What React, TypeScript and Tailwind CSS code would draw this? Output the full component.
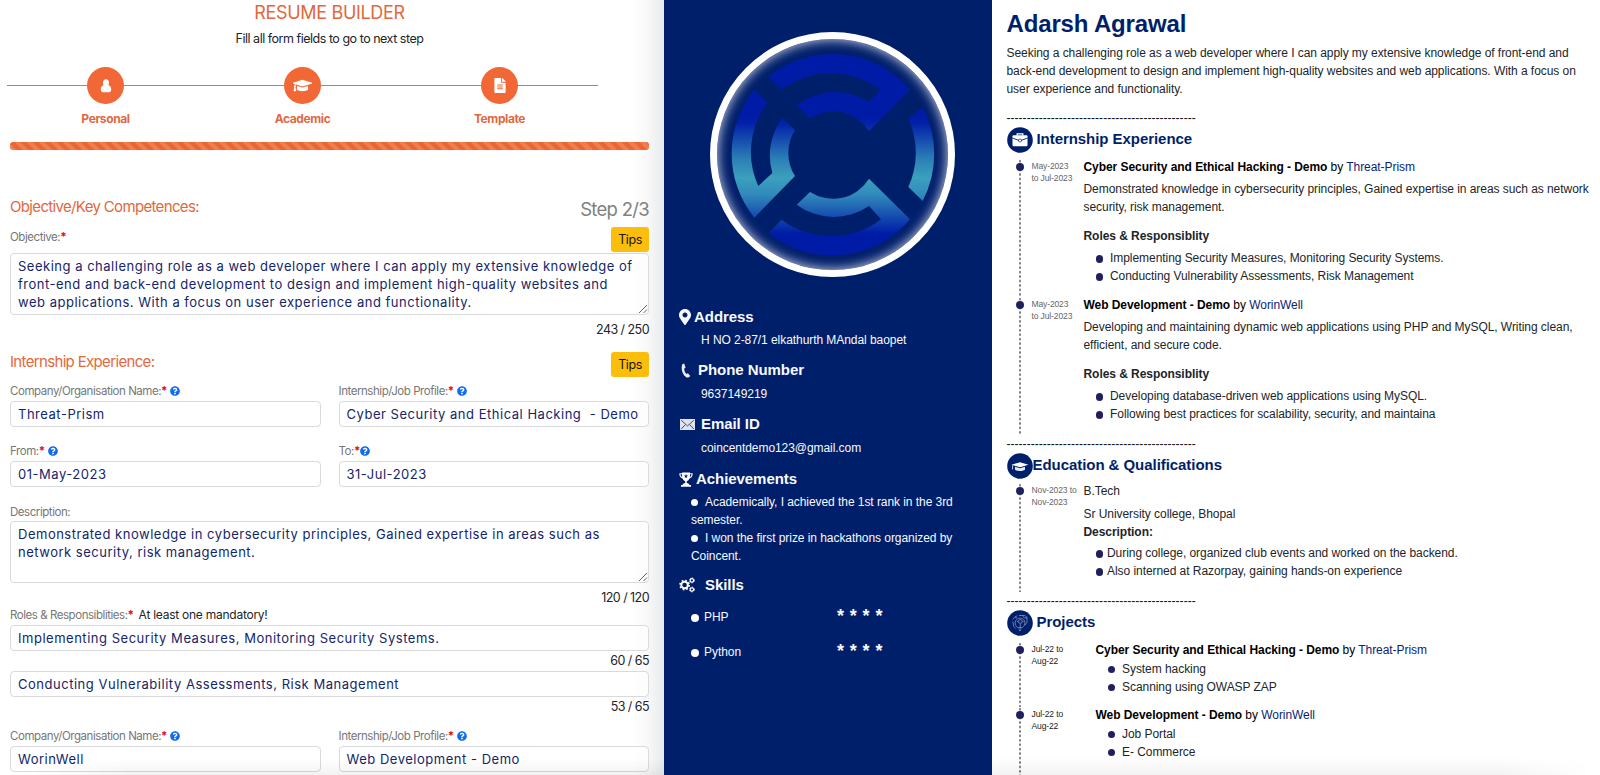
import React from "react";
import { FaMapMarkerAlt, FaQuestionCircle, FaGraduationCap, FaFileAlt } from "react-icons/fa";

/* ---------- Form panel ---------- */

function PersonIcon() {
  return (
    <svg viewBox="0 0 12 15" className="h-[14px] w-[12px]" fill="white">
      <path d="M6 .4c2.100 0 3.200 1.400 3.200 3.400 0 1.200-.3 2.100-.7 2.900 2 .7 3.100 2 3.100 4.300 0 2-.9 3.200-2.600 3.200H3C1.300 14.200.4 13 .4 11c0-2.300 1.100-3.600 3.100-4.300-.4-.8-.7-1.700-.7-2.900C2.800 1.800 3.900.4 6 .4z" />
    </svg>
  );
}

const steps = [
  { label: "Personal", icon: <PersonIcon /> },
  { label: "Academic", icon: <FaGraduationCap className="h-[19px] w-[19px]" /> },
  { label: "Template", icon: <FaFileAlt className="h-[15px] w-[14px]" /> },
];

function Stepper() {
  return (
    <div className="ml-[7px] grid w-[591px] grid-cols-3">
      {steps.map((s) => (
        <div key={s.label} className="flex flex-col items-center">
          <div className="flex w-full items-center">
            <div className="h-[1.5px] flex-1 bg-[#e0714a]" />
            <div className="flex h-[37px] w-[37px] items-center justify-center rounded-full bg-[#f16735] text-white">{s.icon}</div>
            <div className="h-[1.5px] flex-1 bg-[#e0714a]" />
          </div>
          <div className="mt-[6px] h-[18px] text-[12px] font-bold leading-[18px] tracking-[-0.4px] text-[#e0693f]">{s.label}</div>
        </div>
      ))}
    </div>
  );
}

function Tips() {
  return (
    <button className="h-[25px] w-[38px] rounded-[3px] bg-[#fcbe0d] text-[12.5px] leading-[25px] tracking-[-0.4px] text-[#151515]">Tips</button>
  );
}

function Label({ text, star = true, help = false, tight = false }: { text: string; star?: boolean; help?: boolean; tight?: boolean }) {
  return (
    <div className="flex h-[16px] items-center text-[11.5px] leading-[16px] tracking-[-0.45px] text-[#777]">
      <span>{text}</span>
      {star && <span className="font-bold text-[#e0121b]">*</span>}
      {help && <FaQuestionCircle className={tight ? "h-[10px] w-[10px] text-[#0f6cf0]" : "ml-[3px] h-[10px] w-[10px] text-[#0f6cf0]"} />}
    </div>
  );
}

function Input({ value }: { value: string }) {
  return (
    <div className="h-[26px] overflow-hidden whitespace-pre rounded-[4px] border border-[#d9dadd] bg-white/60 px-[7px] text-[13px] leading-[24px] tracking-[0.52px] text-[#14256b]">
      {value}
    </div>
  );
}

function Area({ lines }: { lines: string[] }) {
  return (
    <div className="relative h-[62px] rounded-[4px] border border-[#d9dadd] bg-white/60 px-[7px] pt-[4px] text-[13px] leading-[17.9px] tracking-[0.51px] text-[#14256b]">
      {lines.map((l) => (
        <div key={l} className="whitespace-nowrap">{l}</div>
      ))}
      <svg viewBox="0 0 10 10" className="absolute bottom-0 right-0 h-[10px] w-[10px]" stroke="#666" strokeWidth="1" fill="none">
        <path d="M1 9L9 1M5.500 9L9 5.500" />
      </svg>
    </div>
  );
}

function Counter({ children }: { children: string }) {
  return <div className="h-[18px] text-right text-[12.5px] leading-[20px] tracking-[-0.55px] text-[#212529]">{children}</div>;
}

function Heading({ children }: { children: string }) {
  return <div className="text-[15px] leading-[20px] tracking-[-0.66px] text-[#e2683c]">{children}</div>;
}

function FormPanel() {
  return (
    <section
      className="h-[775px] w-[664px] shrink-0 overflow-hidden bg-[linear-gradient(to_right,transparent_632px,#f8f8f8_648px,#e7eaec_664px)]"
      style={{ fontFamily: 'Inter, "Liberation Sans", sans-serif' }}
    >
      <h1 className="h-[24px] w-[659px] text-center text-[18px] leading-[26px] tracking-[-0.34px] text-[#e2683c]">RESUME BUILDER</h1>
      <p className="mb-[19px] mt-[6px] h-[18px] w-[659px] text-center text-[12.500px] leading-[18px] tracking-[-0.48px] text-[#212529]">
        Fill all form fields to go to next step
      </p>
      <Stepper />
      <div className="ml-[10px] w-[639px]">
        <div className="mt-[14px] h-[8px] rounded-[3px] bg-[#ee6534] bg-[repeating-linear-gradient(45deg,#f17c50_0_4.250px,#ee6534_4.250px_8.500px)]" />
        <div className="mt-[47px] flex h-[30px] justify-between">
          <Heading>Objective/Key Competences:</Heading>
          <div className="mt-[-1px] text-[18.500px] leading-[26px] tracking-[-0.700px] text-[#808080]">Step 2/3</div>
        </div>
        <div className="flex h-[26px] items-start justify-between">
          <div className="pt-[2px]"><Label text="Objective:" /></div>
          <Tips />
        </div>
        <Area
          lines={[
            "Seeking a challenging role as a web developer where I can apply my extensive knowledge of",
            "front-end and back-end development to design and implement high-quality websites and",
            "web applications. With a focus on user experience and functionality.",
          ]}
        />
        <div className="mt-[5px]"><Counter>243 / 250</Counter></div>
        <div className="mt-[14px] flex h-[31px] items-start justify-between">
          <Heading>Internship Experience:</Heading>
          <Tips />
        </div>
        <div className="grid grid-cols-2 gap-x-[18px]">
          <div><Label text="Company/Organisation Name:" help /><div className="mt-[2px]"><Input value="Threat-Prism" /></div></div>
          <div><Label text="Internship/Job Profile:" help /><div className="mt-[2px]"><Input value="Cyber Security and Ethical Hacking  - Demo" /></div></div>
        </div>
        <div className="mt-[16px] grid grid-cols-2 gap-x-[18px]">
          <div><Label text="From:" help /><div className="mt-[2px]"><Input value="01-May-2023" /></div></div>
          <div><Label text="To:" help tight /><div className="mt-[2px]"><Input value="31-Jul-2023" /></div></div>
        </div>
        <div className="mt-[17px]"><Label text="Description:" star={false} /></div>
        <div className="mt-[1px]">
          <Area lines={["Demonstrated knowledge in cybersecurity principles, Gained expertise in areas such as", "network security, risk management."]} />
        </div>
        <div className="mt-[5px]"><Counter>120 / 120</Counter></div>
        <div className="mb-[2px] flex h-[17px] items-center">
          <Label text="Roles &amp; Responsiblities:" />
          <span className="ml-[5px] text-[12px] leading-[16px] tracking-[-0.25px] text-[#212529]">At least one mandatory!</span>
        </div>
        <Input value="Implementing Security Measures, Monitoring Security Systems." />
        <Counter>60 / 65</Counter>
        <div className="mt-[2px]"><Input value="Conducting Vulnerability Assessments, Risk Management" /></div>
        <Counter>53 / 65</Counter>
        <div className="mt-[13px] grid grid-cols-2 gap-x-[18px]">
          <div><Label text="Company/Organisation Name:" help /><div className="mt-[2px]"><Input value="WorinWell" /></div></div>
          <div><Label text="Internship/Job Profile:" help /><div className="mt-[2px]"><Input value="Web Development - Demo" /></div></div>
        </div>
      </div>
    </section>
  );
}

/* ---------- Profile sidebar ---------- */

function Emblem() {
  return (
    <svg viewBox="150 95 735 735" className="h-full w-full">
      <defs>
        <linearGradient id="emblem" gradientUnits="userSpaceOnUse" x1="0" y1="350" x2="0" y2="700">
          <stop offset="0" stopColor="#001ba6" />
          <stop offset="0.06" stopColor="#0422a8" />
          <stop offset="0.36" stopColor="#2b7fb6" />
          <stop offset="0.52" stopColor="#3ba0bd" />
          <stop offset="0.66" stopColor="#318bbb" />
          <stop offset="1" stopColor="#001ba6" />
        </linearGradient>
      </defs>
      <g fill="url(#emblem)">
        <path d="M325 230A305 305 0 0 1 750 268L627 392A127 127 0 0 0 450 354L410 315A187 187 0 0 1 627 305L660 268A245 245 0 0 0 365 268Z" />
        <path d="M283 268A305 305 0 0 0 283 652L405 527A127 127 0 0 1 405 390L367 353A187 187 0 0 0 337 518L295 557A245 245 0 0 1 322 308Z" />
        <path d="M788 320A305 305 0 0 1 788 602L745 560A245 245 0 0 0 745 355Z" />
        <path d="M325 698A305 305 0 0 0 750 657L627 535A127 127 0 0 1 450 575L410 613A187 187 0 0 0 627 617L663 657A245 245 0 0 1 365 658Z" />
      </g>
    </svg>
  );
}

function PhoneIcon() {
  return (
    <svg viewBox="0 0 10 15" className="h-[15px] w-[10px]" fill="#e9ebf4">
      <path d="M3.200.500L1.300 1.300C-.2 5.500 1 11.300 5.200 14.300c1 .5 2.200.3 3-.3L9.300 12.900 6.900 10.300 5.300 11C4 9.600 3.200 7.700 3.200 5.600L4.600 4.800z" />
    </svg>
  );
}

function MailIcon() {
  return (
    <svg viewBox="0 0 15 11" className="h-[11px] w-[15px]">
      <rect width="15" height="11" fill="#dfe2ee" />
      <path d="M1.200 1.200L7.500 7L13.800 1.200M1.200 10L5.500 5.500M13.800 10L9.500 5.500" fill="none" stroke="#2c3d7d" strokeWidth=".9" />
    </svg>
  );
}

function TrophyIcon() {
  return (
    <svg viewBox="0 0 14 15" className="h-[15px] w-[14px]">
      <path d="M3 .4h8v3.200c0 3-1.400 5-3.200 5.700v1.700c1.500.3 2.600 1 2.600 2H12v1.700H2V13h1.600c0-1 1.100-1.700 2.600-2V9.300C4.400 8.600 3 6.600 3 3.600z" fill="#fff" />
      <path d="M3.400 1.800H.9c0 2.400 1.200 4 3.400 4.300M10.600 1.800h2.500c0 2.400-1.200 4-3.400 4.300" fill="none" stroke="#fff" strokeWidth="1.100" />
      <path d="M7 2l.6 1.400 1.500.1-1.200 1 .4 1.500L7 5.200 5.700 6l.4-1.500-1.200-1 1.500-.1z" fill="#001f6b" />
    </svg>
  );
}

function GearsIcon() {
  return (
    <svg viewBox="0 0 16 16" className="h-[16px] w-[16px]" fill="none" stroke="#fff">
      <circle cx="5.600" cy="8" r="3.300" strokeWidth="2" />
      <circle cx="5.600" cy="8" r="4.600" strokeWidth="1.600" strokeDasharray="1.800 1.813" />
      <circle cx="12.900" cy="3.400" r="1.700" strokeWidth="1.200" />
      <circle cx="12.900" cy="3.400" r="2.400" strokeWidth="1" strokeDasharray="1.250 1.263" />
      <circle cx="12.900" cy="12.500" r="1.700" strokeWidth="1.200" />
      <circle cx="12.900" cy="12.500" r="2.400" strokeWidth="1" strokeDasharray="1.250 1.263" />
    </svg>
  );
}

function SideHeading({ icon, iconWidth, children }: { icon: React.ReactNode; iconWidth: string; children: string }) {
  return (
    <div className="flex h-[20px] items-center text-[15px] font-bold leading-[20px]">
      <span className={`${iconWidth} flex shrink-0`}>{icon}</span>
      <span>{children}</span>
    </div>
  );
}

function Disc({ size }: { size: string }) {
  return <span className={`inline-block shrink-0 rounded-full bg-white ${size}`} />;
}

function Sidebar() {
  return (
    <aside className="h-[775px] w-[328px] shrink-0 overflow-hidden bg-[#001f6b] text-[12px] tracking-[-0.06px] text-[#f8f9fc]">
      <div className="relative ml-[46px] mt-[32px] h-[245px] w-[245px] rounded-full">
        <Emblem />
        <div className="absolute inset-0 rounded-full border-[7px] border-white shadow-[inset_0_0_11px_1px_rgba(255,255,255,0.75)]" />
      </div>
      <div className="pl-[15px] pt-[30px]">
        <SideHeading iconWidth="w-[15px]" icon={<FaMapMarkerAlt className="h-[16px] w-[12px]" />}>Address</SideHeading>
        <p className="mt-[4px] h-[18px] pl-[22px] leading-[18px]">H NO 2-87/1 elkathurth MAndal baopet</p>
        <div className="mt-[11px]"><SideHeading iconWidth="w-[19px] pl-[2px]" icon={<PhoneIcon />}>Phone Number</SideHeading></div>
        <p className="mt-[5px] h-[18px] pl-[22px] leading-[18px]">9637149219</p>
        <div className="mt-[11px]"><SideHeading iconWidth="w-[22px] pl-[1px]" icon={<MailIcon />}>Email ID</SideHeading></div>
        <p className="mt-[5px] h-[18px] pl-[22px] leading-[18px]">coincentdemo123@gmail.com</p>
        <div className="mt-[12px]"><SideHeading iconWidth="w-[17px]" icon={<TrophyIcon />}>Achievements</SideHeading></div>
        <div className="mt-[4px] pl-[12px] leading-[18px]">
          <div className="flex items-center gap-[7px]"><Disc size="h-[7px] w-[7px] mt-[1px]" />Academically, I achieved the 1st rank in the 3rd</div>
          <div>semester.</div>
          <div className="flex items-center gap-[7px]"><Disc size="h-[7px] w-[7px] mt-[1px]" />I won the first prize in hackathons organized by</div>
          <div>Coincent.</div>
        </div>
        <div className="mb-[11px] mt-[10px]"><SideHeading iconWidth="w-[26px]" icon={<GearsIcon />}>Skills</SideHeading></div>
        {["PHP", "Python"].map((s) => (
          <div key={s} className="mb-[13px] flex h-[22px] items-center pl-[12px]">
            <Disc size="h-[8px] w-[8px] mt-[2px]" />
            <span className="w-[138px] pl-[5px]">{s}</span>
            <span className="mt-[-2px] text-[18px] font-bold leading-[22px] tracking-[0.400px]">* * * *</span>
          </div>
        ))}
      </div>
    </aside>
  );
}

/* ---------- Resume preview ---------- */

function BriefcaseIcon() {
  return (
    <svg viewBox="0 0 26 26" className="h-[26px] w-[26px]">
      <circle cx="13" cy="13" r="12.800" fill="#001f6b" />
      <path d="M10.200 8.500V6.800h5.600v1.700" fill="none" stroke="#fff" strokeWidth="1.300" />
      <rect x="5.500" y="8.300" width="15" height="11" rx="1" fill="#fff" />
      <path d="M5.500 11l6 2.300h3l6-2.300" fill="none" stroke="#001f6b" strokeWidth=".9" />
      <rect x="11.500" y="12.200" width="3" height="2.600" rx=".8" fill="#fff" stroke="#001f6b" strokeWidth=".7" />
    </svg>
  );
}

function CapIcon() {
  return (
    <svg viewBox="0 0 26 26" className="h-[26px] w-[26px]">
      <circle cx="13" cy="13" r="12.800" fill="#001f6b" />
      <path d="M13 9.300l8.500 2.400-8.500 2.600-8.500-2.600z" fill="#fff" />
      <path d="M8 13.800l5 1.500 5-1.500v3c-2.700 1.700-7.300 1.700-10 0z" fill="#e6e9f2" />
      <path d="M5.600 12.200v4.200" stroke="#fff" strokeWidth=".8" />
    </svg>
  );
}

function IdeaIcon() {
  return (
    <svg viewBox="0 0 26 26" className="h-[26px] w-[26px]">
      <circle cx="13" cy="13" r="12.800" fill="#001f6b" />
      <g fill="none" stroke="#8793ba" strokeWidth=".8">
        <path d="M10.500 17.500c-1.600-1.200-2.500-3-2.300-4.900.3-2.700 2.400-4.500 5-4.500s4.700 2 4.700 4.600c0 2-.9 3.500-2.400 4.800M10.500 17.500h5M11.500 19h3M12 20.500h2" />
        <path d="M6 9.500C7 7.500 8.500 6.300 10.500 5.800M12 5.500h5.500l2.500 1.600v5.200l-2 3M5.800 11.500l1 5 2 2M15.500 5.500l2 2.500 2.500 0" />
        <circle cx="13.300" cy="11.500" r="1.900" />
        <path d="M13.300 13.500v4M10 11.500h1.400M15.200 11.500h1.300M8 7l2 1" />
      </g>
    </svg>
  );
}

function Section({ icon, title, gap, offset, children }: { icon: React.ReactNode; title: string; gap: string; offset: string; children: React.ReactNode }) {
  return (
    <section>
      <div className="h-[18px] leading-[18px] tracking-[0.030px] text-[#111]">-----------------------------------------------</div>
      <div className={`flex h-[26px] items-start text-[15px] font-bold leading-[24px] text-[#001f6b] ${gap}`}>
        {icon}
        <h2>{title}</h2>
      </div>
      <div className={`flex flex-col ${offset}`}>{children}</div>
    </section>
  );
}

interface EntryProps {
  dates: [string, string];
  dark?: boolean;
  indent: string;
  pad: string;
  children: React.ReactNode;
}

function Entry({ dates, dark = false, indent, pad, children }: EntryProps) {
  return (
    <div className="flex">
      <div className="w-[25px] shrink-0 bg-[radial-gradient(circle,#77777c_0.9px,transparent_1.300px)] bg-[length:26px_4.450px] bg-repeat-y pl-[9px] pt-[4px]">
        <div className="h-[8px] w-[8px] rounded-full bg-[#211f5e]" />
      </div>
      <div className={`${indent} shrink-0 whitespace-pre pt-[1px] text-[8.500px] leading-[12.200px] tracking-[-0.120px] ${dark ? "text-[#222]" : "text-[#666]"}`}>
        {dates[0]}
        <br />
        {dates[1]}
      </div>
      <div className={`mt-[-1px] whitespace-nowrap leading-[18px] ${pad}`}>{children}</div>
    </div>
  );
}

function Title({ name, by }: { name: string; by: string }) {
  return (
    <div className="text-black">
      <b>{name}</b> by <span className="text-[#0a2472]">{by}</span>
    </div>
  );
}

function Bullets({ items, gap, className }: { items: string[]; gap: string; className: string }) {
  return (
    <ul className={className}>
      {items.map((t) => (
        <li key={t} className={`flex items-center ${gap}`}>
          <span className="mt-[2px] h-[7.500px] w-[7.500px] rounded-full bg-[#211f5e]" />
          {t}
        </li>
      ))}
    </ul>
  );
}

function Resume() {
  return (
    <main className="h-[775px] flex-1 overflow-hidden pl-[14.500px] pt-[10px] text-[12px] tracking-[-0.055px] text-[#212529]">
      <h1 className="h-[28px] text-[24px] font-bold leading-[28px] tracking-[-0.150px] text-[#001f6b]">Adarsh Agrawal</h1>
      <p className="mb-[11px] mt-[6px] whitespace-nowrap leading-[18px]">
        Seeking a challenging role as a web developer where I can apply my extensive knowledge of front-end and
        <br />
        back-end development to design and implement high-quality websites and web applications. With a focus on
        <br />
        user experience and functionality.
      </p>
      <Section icon={<BriefcaseIcon />} title="Internship Experience" gap="gap-[4px]" offset="mt-[6px]">
        <Entry dates={["May-2023", "to Jul-2023"]} indent="w-[52px]" pad="pb-[12px]">
          <Title name="Cyber Security and Ethical Hacking - Demo" by="Threat-Prism" />
          <p className="mt-[4px]">
            Demonstrated knowledge in cybersecurity principles, Gained expertise in areas such as network
            <br />
            security, risk management.
          </p>
          <b className="mt-[11px] block">Roles &amp; Responsiblity</b>
          <Bullets className="mt-[4px] pl-[12px]" gap="gap-[7px]" items={["Implementing Security Measures, Monitoring Security Systems.", "Conducting Vulnerability Assessments, Risk Management"]} />
        </Entry>
        <Entry dates={["May-2023", "to Jul-2023"]} indent="w-[52px]" pad="pb-[12px]">
          <Title name="Web Development - Demo" by="WorinWell" />
          <p className="mt-[4px]">
            Developing and maintaining dynamic web applications using PHP and MySQL, Writing clean,
            <br />
            efficient, and secure code.
          </p>
          <b className="mt-[11px] block">Roles &amp; Responsiblity</b>
          <Bullets className="mt-[4px] pl-[12px]" gap="gap-[7px]" items={["Developing database-driven web applications using MySQL.", "Following best practices for scalability, security, and maintaina"]} />
        </Entry>
      </Section>
      <Section icon={<CapIcon />} title="Education &amp; Qualifications" gap="gap-0" offset="mt-[4px]">
        <Entry dates={["Nov-2023 to", "Nov-2023"]} indent="w-[52px]" pad="pb-[12px]">
          <div>B.Tech</div>
          <div className="mt-[5px]">Sr University college, Bhopal</div>
          <b className="block">Description:</b>
          <Bullets className="mt-[3px] pl-[12px]" gap="gap-[4px]" items={["During college, organized club events and worked on the backend.", "Also interned at Razorpay, gaining hands-on experience"]} />
        </Entry>
      </Section>
      <Section icon={<IdeaIcon />} title="Projects" gap="gap-[4px]" offset="mt-[5.500px]">
        <Entry dark dates={["Jul-22 to", "Aug-22"]} indent="w-[64px]" pad="pb-[11px]">
          <Title name="Cyber Security and Ethical Hacking - Demo" by="Threat-Prism" />
          <Bullets className="mt-[1px] pl-[12px]" gap="gap-[7px]" items={["System hacking", "Scanning using OWASP ZAP"]} />
        </Entry>
        <Entry dark dates={["Jul-22 to", "Aug-22"]} indent="w-[64px]" pad="pb-[30px]">
          <Title name="Web Development - Demo" by="WorinWell" />
          <Bullets className="mt-[1px] pl-[12px]" gap="gap-[7px]" items={["Job Portal", "E- Commerce"]} />
        </Entry>
      </Section>
    </main>
  );
}

export default function App() {
  return (
    <div className="relative flex h-[775px] w-[1600px] overflow-hidden bg-white" style={{ fontFamily: '"Liberation Sans", Arial, sans-serif' }}>
      <FormPanel />
      <Sidebar />
      <Resume />
      <div className="pointer-events-none absolute bottom-0 left-[30px] h-[16px] w-[634px] bg-gradient-to-b from-transparent to-black/5 [mask-image:linear-gradient(to_right,transparent,black_100px)]" />
      <div className="pointer-events-none absolute bottom-0 left-[992px] h-[18px] w-[600px] bg-gradient-to-b from-transparent to-black/5 [mask-image:linear-gradient(to_left,transparent,black_100px)]" />
    </div>
  );
}
